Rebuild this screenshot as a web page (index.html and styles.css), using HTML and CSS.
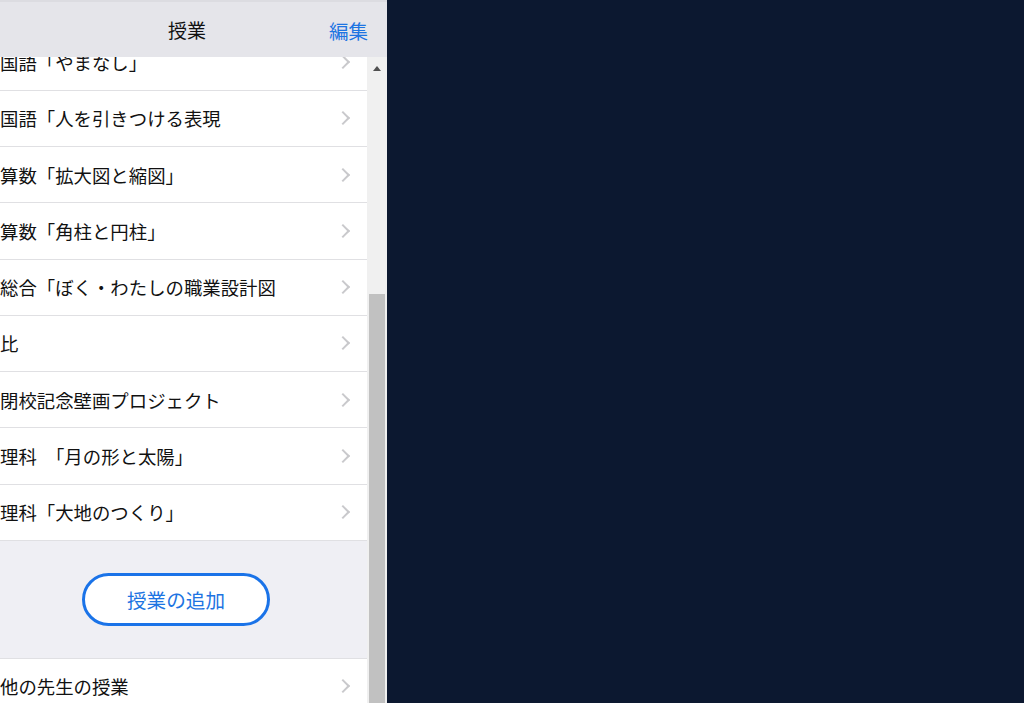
FILE: index.html
```html
<!DOCTYPE html>
<html lang="ja">
<head>
    <meta charset="UTF-8">
    <meta name="viewport" content="width=device-width, initial-scale=1.0">
    <title>授業</title>
    <link rel="stylesheet" href="styles.css">
</head>
<body>
    <div class="app">
        <div class="sidebar">
            <div class="navbar">
                <div class="nav-title">授業</div>
                <div class="nav-edit">編集</div>
            </div>

            <div class="scroll-area">
                <div class="list-wrap">
                    <div class="list">
                        <div class="row"><span>国語「やまなし」</span><i class="chev"></i></div>
                        <div class="row"><span>国語「人を引きつける表現</span><i class="chev"></i></div>
                        <div class="row"><span>算数「拡大図と縮図」</span><i class="chev"></i></div>
                        <div class="row"><span>算数「角柱と円柱」</span><i class="chev"></i></div>
                        <div class="row"><span>総合「ぼく・わたしの職業設計図</span><i class="chev"></i></div>
                        <div class="row"><span>比</span><i class="chev"></i></div>
                        <div class="row"><span>閉校記念壁画プロジェクト</span><i class="chev"></i></div>
                        <div class="row"><span class="wide">理科　「月の形と太陽」</span><i class="chev"></i></div>
                        <div class="row"><span>理科「大地のつくり」</span><i class="chev"></i></div>

                        <div class="add-section">
                            <div class="add-button">授業の追加</div>
                        </div>

                        <div class="row row-top"><span>他の先生の授業</span><i class="chev"></i></div>
                    </div>
                </div>

                <div class="scrollbar">
                    <div class="scroll-up"></div>
                    <div class="scroll-thumb"></div>
                </div>
            </div>
        </div>

        <div class="detail"></div>
    </div>
</body>
</html>
```

FILE: styles.css
```css
* {
    margin: 0;
    padding: 0;
    box-sizing: border-box;
}

body {
    font-family: "Noto Sans CJK JP", "Noto Sans", sans-serif;
    background: #0c1830;
    color: #111;
    height: 100vh;
    overflow: hidden;
}

.app {
    display: flex;
    height: 100vh;
}

.sidebar {
    width: 387px;
    display: flex;
    flex-direction: column;
    background: #fff;
}

.navbar {
    height: 57px;
    flex-shrink: 0;
    background: #e5e5ea;
    border-top: 2px solid #dcdce1;
    display: flex;
    align-items: center;
    position: relative;
}

.nav-title {
    width: 374px;
    text-align: center;
    font-size: 19px;
    color: #111;
}

.nav-edit {
    position: absolute;
    left: 329px;
    top: 14px;
    font-size: 19.5px;
    color: #1d74e2;
}

.scroll-area {
    flex: 1;
    display: flex;
    overflow: hidden;
}

.list-wrap {
    width: 367px;
    overflow: hidden;
}

.list {
    margin-top: -22.5px;
}

.row {
    height: 56.25px;
    display: flex;
    align-items: center;
    justify-content: space-between;
    padding-right: 17px;
    border-bottom: 1px solid #e0e0e3;
    font-size: 18.4px;
    background: #fff;
}

.row .wide {
    word-spacing: 4px;
}

.row-top {
    border-top: 1px solid #e0e0e3;
}

.chev {
    width: 10px;
    height: 10px;
    border-right: 2px solid #c9c9cc;
    border-top: 2px solid #c9c9cc;
    transform: rotate(45deg);
    margin-right: 2px;
}

.add-section {
    height: 117px;
    background: #efeff4;
    display: flex;
    align-items: center;
    justify-content: center;
    padding-right: 15px;
}

.add-button {
    width: 188px;
    height: 53px;
    border: 3px solid #1a73e8;
    border-radius: 27px;
    background: #fff;
    color: #1d74e2;
    font-size: 19.6px;
    display: flex;
    align-items: center;
    justify-content: center;
}

.scrollbar {
    width: 20px;
    background: #f0f0f0;
    display: flex;
    flex-direction: column;
    align-items: center;
}

.scroll-up {
    width: 0;
    height: 0;
    margin-top: 9px;
    border-left: 4px solid transparent;
    border-right: 4px solid transparent;
    border-bottom: 5px solid #505050;
}

.scroll-thumb {
    width: 16px;
    margin-top: 223px;
    flex: 1;
    background: #c1c1c1;
}

.detail {
    flex: 1;
    background: #0c1830;
}
```
